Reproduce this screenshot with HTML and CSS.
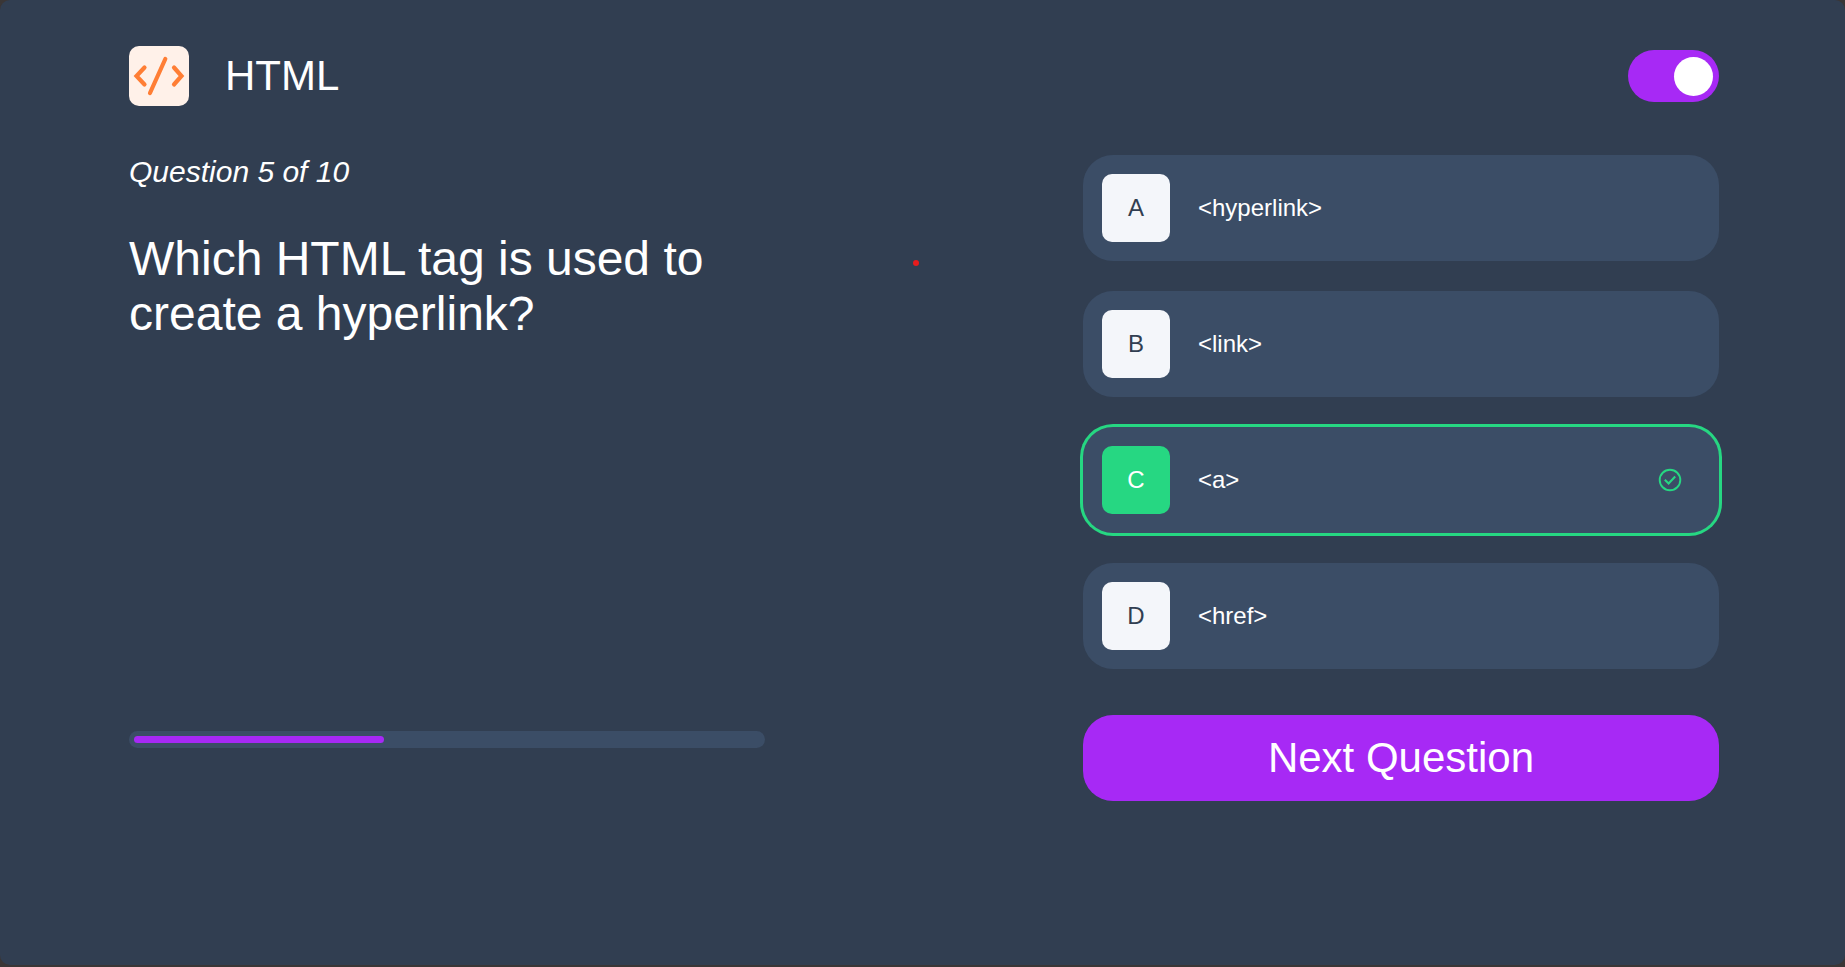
FILE: index.html
```html
<!DOCTYPE html>
<html lang="en">
<head>
<meta charset="utf-8">
<meta name="viewport" content="width=device-width, initial-scale=1">
<title>HTML Quiz</title>
<link rel="stylesheet" href="styles.css">
</head>
<body>
<div class="page">
  <header class="header">
    <div class="subject">
      <svg class="subject-icon" viewBox="0 0 60 60" aria-hidden="true">
        <path d="M15.500 21.500 7.500 30l8 8.500M45 21.500 52.500 30 45 38.500M36.300 13 21 47" fill="none" stroke="#ff7e35" stroke-width="4.200" stroke-linecap="round" stroke-linejoin="miter"/>
      </svg>
      <h1 class="subject-name">HTML</h1>
    </div>
    <input class="toggle" type="checkbox" role="switch" aria-label="Dark mode" checked>
  </header>
  <main class="quiz">
    <section class="question">
      <p class="counter">Question 5 of 10</p>
      <h2 class="prompt">Which HTML tag is used to create a hyperlink?</h2>
      <div class="progress" role="progressbar" aria-label="Quiz progress" aria-valuemin="0" aria-valuemax="10" aria-valuenow="4">
        <div class="progress-fill" style="width: 40%"></div>
      </div>
    </section>
    <section class="answers">
      <div class="options">
        <button class="option" type="button"><span class="key">A</span><span class="answer">&lt;hyperlink&gt;</span></button>
        <button class="option" type="button"><span class="key">B</span><span class="answer">&lt;link&gt;</span></button>
        <button class="option correct" type="button"><span class="key">C</span><span class="answer">&lt;a&gt;</span>
          <svg class="check" viewBox="0 0 24 24" aria-hidden="true" fill="none" stroke="currentColor" stroke-width="1.900">
            <circle cx="12" cy="12" r="10.300"/>
            <path d="M6.800 11.800l3.800 3.600 6.600-6.800" stroke-width="2.100"/>
          </svg>
        </button>
        <button class="option" type="button"><span class="key">D</span><span class="answer">&lt;href&gt;</span></button>
      </div>
      <button class="next" type="button">Next Question</button>
    </section>
  </main>
  <span class="marker"></span>
</div>
</body>
</html>
```
FILE: styles.css
```css
* {
  box-sizing: border-box;
}

body {
  margin: 0;
  background: #3a3636;
  color: #fff;
  font-family: "Liberation Sans", Arial, sans-serif;
}

.page {
  position: relative;
  min-height: calc(100vh - 2px);
  padding: 46px 126px 40px 129px;
  border-radius: 10px;
  background: #313e51;
}

.header,
.subject {
  display: flex;
  align-items: center;
}

.header {
  justify-content: space-between;
  margin-bottom: 49px;
}

.subject {
  gap: 36px;
}

.subject-icon {
  width: 60px;
  height: 60px;
  border-radius: 10px;
  background: #fff1e9;
}

.subject-name {
  margin: 0;
  font-size: 42px;
  font-weight: 400;
  line-height: 48px;
}

.toggle {
  appearance: none;
  display: flex;
  align-items: center;
  justify-content: flex-end;
  width: 91px;
  height: 52px;
  margin: 0;
  padding: 0 6px;
  border-radius: 26px;
  background: #a729f5;
}

.toggle::before {
  content: "";
  width: 39px;
  height: 39px;
  border-radius: 50%;
  background: #fff;
}

.toggle:not(:checked) {
  justify-content: flex-start;
}

.quiz {
  display: grid;
  grid-template-columns: 2fr 2fr;
  column-gap: 20%;
}

.question {
  display: flex;
  flex-direction: column;
  padding-bottom: 53px;
}

.counter {
  margin: 0 0 42px;
  font-size: 30px;
  font-style: italic;
  line-height: 34px;
}

.prompt {
  margin: 0;
  font-size: 48px;
  font-weight: 400;
  line-height: 55px;
}

.progress {
  margin-top: auto;
  padding: 5px;
  border-radius: 9px;
  background: #3b4d66;
}

.progress-fill {
  height: 7px;
  border-radius: 4px;
  background: #a729f5;
}

.options {
  display: grid;
  gap: 30px;
  margin-bottom: 46px;
}

.option {
  display: flex;
  align-items: center;
  gap: 28px;
  padding: 19px;
  border: 0;
  border-radius: 30px;
  background: #3b4d66;
  color: #fff;
  font: 24px "Liberation Sans", Arial, sans-serif;
  text-align: left;
}

.key {
  display: grid;
  place-items: center;
  width: 68px;
  height: 68px;
  border-radius: 10px;
  background: #f4f6fa;
  color: #313e51;
}

.correct {
  box-shadow: 0 0 0 3px #26d782;
}

.correct .key {
  background: #26d782;
  color: #fff;
}

.check {
  width: 24px;
  height: 24px;
  margin: 0 18px 0 auto;
  color: #26d782;
}

.next {
  width: 100%;
  padding: 19px;
  border: 0;
  border-radius: 30px;
  background: #a729f5;
  color: #fff;
  font: 42px/48px "Liberation Sans", Arial, sans-serif;
}

.marker {
  position: absolute;
  top: 260px;
  left: 913px;
  width: 6px;
  height: 6px;
  border-radius: 50%;
  background: #e81c1c;
}
```
